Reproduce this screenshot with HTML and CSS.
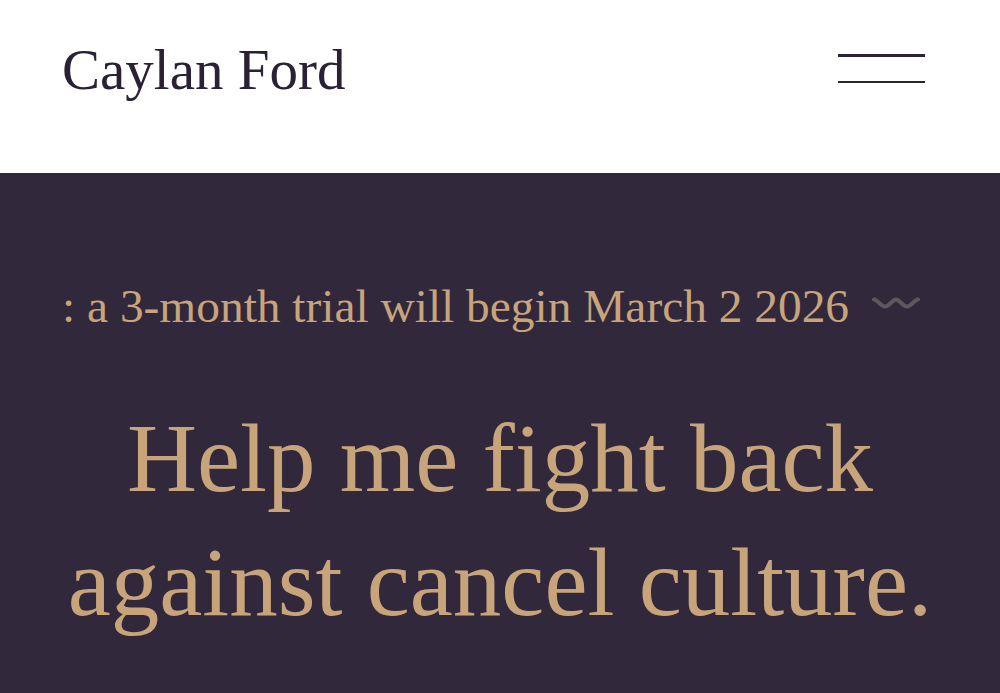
FILE: index.html
```html
<!DOCTYPE html>
<html lang="en">
<head>
<meta charset="utf-8">
<title>Caylan Ford</title>
<link rel="stylesheet" href="styles.css">
</head>
<body>
<header class="site-header">
  <div class="brand">Caylan Ford</div>
  <button class="menu-toggle" aria-label="Menu">
    <span class="bar"></span>
    <span class="bar"></span>
  </button>
</header>
<main class="hero">
  <div class="notice">
    <span class="notice-text">: a 3-month trial will begin March 2 2026</span>
    <svg class="wave" viewBox="0 0 50 14" width="50" height="14" aria-hidden="true">
      <path d="M3 3.5 C7 3.5 9 10.5 14 10.5 C19 10.5 21 3.5 25 3.5 C29 3.5 31 10.5 36 10.5 C41 10.5 43 3.5 47 3.5" fill="none" stroke="#5c5860" stroke-width="4" stroke-linecap="round"/>
    </svg>
  </div>
  <h1 class="headline">Help me fight back against cancel culture.</h1>
</main>
</body>
</html>
```
FILE: styles.css
```css
html, body {
  margin: 0;
  padding: 0;
}
body {
  font-family: "Liberation Serif", "Times New Roman", serif;
  background: #32283c;
}
.site-header {
  box-sizing: border-box;
  height: 173px;
  background: #ffffff;
  display: flex;
  justify-content: space-between;
  align-items: flex-start;
  padding: 36px 75px 0 62px;
}
.brand {
  font-size: 57px;
  line-height: 68px;
  color: #2a2234;
  white-space: nowrap;
}
.menu-toggle {
  margin-top: 18px;
  width: 87px;
  height: 29px;
  padding: 0;
  border: 0;
  background: transparent;
  display: flex;
  flex-direction: column;
  justify-content: space-between;
}
.bar {
  display: block;
  width: 87px;
  height: 2.5px;
  background: #2b2436;
}
.hero {
  background: #32283c;
  padding: 105px 62px 40px;
  color: #c8a47b;
}
.notice {
  display: flex;
  align-items: center;
  gap: 22px;
}
.notice-text {
  font-size: 47.4px;
  line-height: 56px;
  white-space: nowrap;
}
.wave {
  flex: none;
  margin-top: -6px;
}
.headline {
  margin: 63px 0 0;
  font-weight: normal;
  font-size: 97px;
  line-height: 124px;
  text-align: center;
}
```
